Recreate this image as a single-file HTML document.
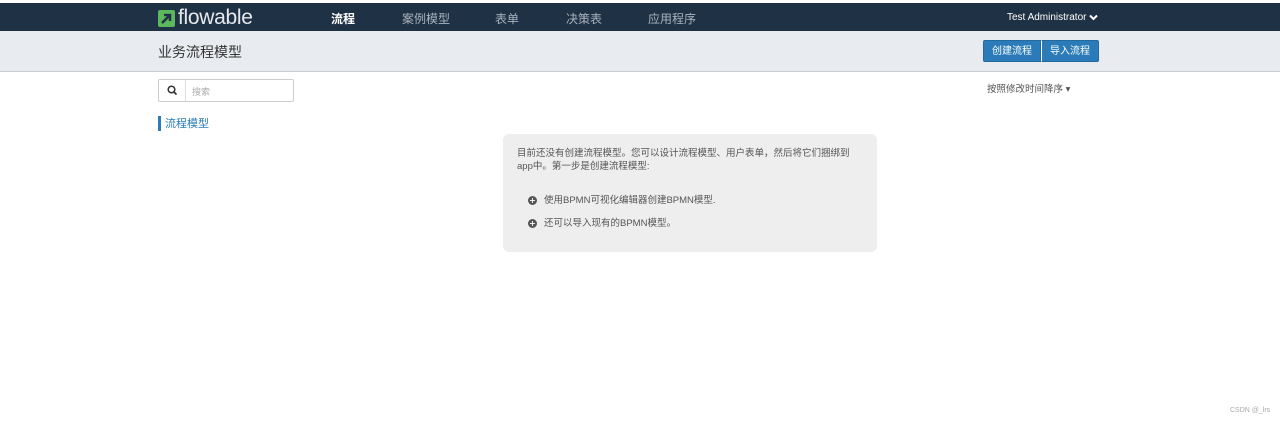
<!DOCTYPE html>
<html><head><meta charset="utf-8"><style>
*{margin:0;padding:0;box-sizing:border-box}
body{width:1280px;height:423px;background:#fff;font-family:"Liberation Sans","Noto Sans CJK SC",sans-serif;position:relative;overflow:hidden;color:#333}
.nav{position:absolute;top:3px;left:0;width:1280px;height:28px;background:#1f3145}
.logo{position:absolute;left:158px;top:5px;height:20px;display:flex;align-items:center}
.logo .txt{color:#e6e9ec;font-size:21px;font-weight:normal;margin-left:3px;letter-spacing:-0.3px;line-height:20px}
.menu a{position:absolute;top:7px;color:#aab3bd;font-size:12px;text-decoration:none}
.menu a.act{color:#fff;font-weight:bold}
.caret{position:absolute;left:338px;top:30px;width:0;height:0;border-left:5px solid transparent;border-right:5px solid transparent;border-top:5px solid #1f3145}
.user{position:absolute;left:1007px;top:9px;color:#fff;font-size:10px;display:flex;align-items:center}
.sub{position:absolute;top:31px;left:0;width:1280px;height:41px;background:#e8ebef;border-bottom:1px solid #c8cdd2}
.sub h1{position:absolute;left:158px;top:11px;font-size:14px;font-weight:normal;color:#333}
.btns{position:absolute;left:983px;top:9px;display:flex}
.btns div{background:#2a7bb8;color:#fff;font-size:10px;height:22px;line-height:22px;padding:0 8px;border:1px solid #24699e}
.btns div:first-child{border-radius:2px 0 0 2px}
.btns div:last-child{border-radius:0 2px 2px 0;border-left:1px solid #fff}
.search{position:absolute;left:158px;top:79px;width:136px;height:23px;border:1px solid #ccc;border-radius:2px}
.search .ic{position:absolute;left:0;top:0;width:27px;height:21px;border-right:1px solid #ddd}
.search span{position:absolute;left:33px;top:5px;font-size:9px;color:#aaa}
.sort{position:absolute;left:987px;top:81px;font-size:9.5px;color:#555}
.side{position:absolute;left:158px;top:116px;border-left:3px solid #2a7bb8;padding-left:4px;color:#2a7bb8;font-size:11px;height:15px;line-height:16px}
.box{position:absolute;left:503px;top:134px;width:374px;height:118px;background:#eee;border-radius:6px;font-size:9.5px;color:#555;line-height:13px}
.box p{position:absolute;left:14px;top:13px;width:340px}
.li{position:absolute;left:25px;display:flex;align-items:center}
.li i{display:inline-block;width:9px;height:9px;border-radius:50%;background:#555;margin-right:7px;position:relative}
.li i:before{content:"";position:absolute;left:2px;top:4px;width:5px;height:1px;background:#eee}
.li i:after{content:"";position:absolute;left:4px;top:2px;width:1px;height:5px;background:#eee}
.wm{position:absolute;left:1230px;top:407px;font-size:7px;color:#aaa}
</style></head><body>
<div class="nav">
 <div class="logo"><svg width="17" height="17" viewBox="0 0 17 17"><rect x="0" y="0" width="17" height="17" rx="2" fill="#5cb85c"/><path d="M4 13 L12 5 M6 5 H12 V11" stroke="#1f3145" stroke-width="2.5" fill="none"/></svg><span class="txt">flowable</span></div>
 <div class="menu"><a class="act" style="left:331px">流程</a><a style="left:402px">案例模型</a><a style="left:495px">表单</a><a style="left:566px">决策表</a><a style="left:648px">应用程序</a></div>
 <div class="user">Test Administrator&nbsp;<svg width="9" height="7" viewBox="0 0 9 7"><path d="M1 1.5 L4.5 5 L8 1.5" stroke="#fff" stroke-width="2" fill="none"/></svg></div>
</div>
<div class="caret"></div>
<div class="sub"><h1>业务流程模型</h1><div class="btns"><div>创建流程</div><div>导入流程</div></div></div>
<div class="search"><div class="ic"><svg width="27" height="21" viewBox="0 0 27 21"><circle cx="12.5" cy="9.5" r="3.3" stroke="#333" stroke-width="1.5" fill="none"/><path d="M15 12 L17.5 14.5" stroke="#333" stroke-width="1.8"/></svg></div><span>搜索</span></div>
<div class="sort">按照修改时间降序 &#9662;</div>
<div class="side">流程模型</div>
<div class="box"><p>目前还没有创建流程模型。您可以设计流程模型、用户表单，然后将它们捆绑到app中。第一步是创建流程模型:</p>
<div class="li" style="top:60px"><i></i>使用BPMN可视化编辑器创建BPMN模型.</div>
<div class="li" style="top:83px"><i></i>还可以导入现有的BPMN模型。</div></div>
<div class="wm">CSDN @_lrs</div>
</body></html>
